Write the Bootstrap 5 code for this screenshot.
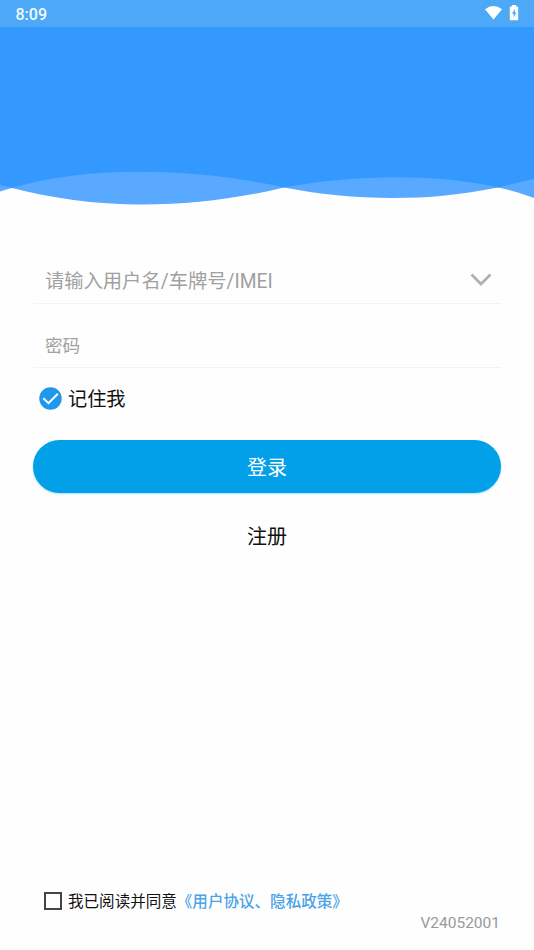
<!DOCTYPE html>
<html lang="zh-CN">
<head>
<meta charset="utf-8">
<meta name="viewport" content="width=device-width, initial-scale=1">
<title>登录</title>
<link href="https://cdn.jsdelivr.net/npm/bootstrap@5.3.0/dist/css/bootstrap.min.css" rel="stylesheet">
<style>
body{font-family:Roboto,"Noto Sans CJK SC",sans-serif;background:#fefefe;color:#111;height:950px;overflow:hidden}
.statusbar{height:27px;background:#4da8f8;color:#effcff;font-size:16px;font-weight:500;line-height:27px;padding:1px 15px 0 15.5px}
.statusbar svg{margin-top:-2px}
.hero{height:183px;background:#fefefe}
.hero svg,.statusbar svg{display:block}
.login{padding:47px 33px 0}
.field{border-bottom:1px solid #f3f3f3;padding:0 8px 0 12px}
.field .form-control{font-size:19.3px;line-height:28px;background:transparent;color:#999}
.field .form-control::placeholder{color:#a0a0a0;opacity:1}
.field-user{height:47px;padding-top:3px}
.field-user svg{margin:12px 1px 0 0}
.field-pass{height:64px;padding-top:21px}
.field-pass .form-control{font-size:17.6px}
.remember{height:28px;margin-top:16px;padding-left:6px;font-size:19.2px;line-height:28px;gap:6px}
.remember span{padding-top:3px}
.btn-login{height:53px;margin-top:28px;padding:8px 0 6px;background:#02a0e9;color:#fff;font-size:20px;line-height:30px;box-shadow:0 1px 2px #a9ddf8}
.btn-login:hover{background:#0293d6;color:#fff}
.btn-register{margin-top:29px;font-size:20px;line-height:30px;color:#111}
.agree{padding-left:44px;font-size:15.55px;line-height:24px;gap:7px}
.agree a{color:#4ba3e8;font-weight:500}
.agree-box{width:18px;height:18px;border:2px solid #444}
.agree-text{padding-top:3px;margin-left:-1px}
.version{font-size:15.5px;line-height:20px;color:#999;padding-right:34px;margin:-1px 0 17px}
</style>
</head>
<body class="d-flex flex-column">
<header>
  <div class="statusbar d-flex justify-content-between align-items-center">
    <span>8:09</span>
    <span class="d-flex align-items-center">
      <svg width="34" height="18" viewBox="0 0 34 18">
        <path d="M0 5.200Q8.500-1.400 17 5.200L8.500 15.400Z" fill="#fff"/>
        <path d="M27 1h4v1.500h1.500q.7 0 .7.700v12.300q0 .7-.7.700h-7q-.7 0-.7-.700V3.200q0-.7.700-.700H27Z" fill="#fff"/>
        <path d="M29.800 4.800 27 9.800h1.700v4l2.700-5.300h-1.600Z" fill="#4da8f8"/>
      </svg>
    </span>
  </div>
  <div class="hero">
    <svg width="534" height="183" viewBox="0 27 534 183">
      <path d="M0 27H534V198Q516 191 498 187.500C460 195 430 198 393 198C355 198 318 194 284 187.500C235 199 190 204.500 142 204.500C95 204.500 50 198 12 188Q5 189.500 0 191.500Z" fill="#58a9ff"/>
      <path d="M0 27H534V179Q516 183 498 187.500C465 180 430 177.300 396 177.300C358 177.300 320 181 284 187.500C235 176.500 185 171.800 136 171.800C92 171.800 50 177 12 188L0 184.500Z" fill="#3399ff"/>
    </svg>
  </div>
</header>
<main class="login">
  <form class="d-flex flex-column">
    <div class="field field-user d-flex align-items-start">
      <input class="form-control border-0 p-0 mt-2 shadow-none" type="text" placeholder="请输入用户名/车牌号/IMEI" aria-label="用户名">
      <svg class="flex-shrink-0" width="22" height="16" viewBox="0 0 22 16"><path d="M1.500 2.500 11 12 20.500 2.500" fill="none" stroke="#b0b0b0" stroke-width="2.800"/></svg>
    </div>
    <div class="field field-pass d-flex align-items-center">
      <input class="form-control border-0 p-0 shadow-none" type="password" placeholder="密码" aria-label="密码">
    </div>
    <div class="remember d-flex align-items-center">
      <svg width="23" height="23" viewBox="0 0 23 23"><circle cx="11.500" cy="11.500" r="11.200" fill="#2196ed"/><path d="M4.300 11.200 9.500 16.200 18.800 6.700" fill="none" stroke="#fff" stroke-width="2"/></svg>
      <span>记住我</span>
    </div>
    <button type="button" class="btn btn-login rounded-pill border-0 w-100">登录</button>
    <button type="button" class="btn btn-register border-0 p-0 align-self-center">注册</button>
  </form>
</main>
<footer class="mt-auto">
  <div class="agree d-flex align-items-center">
    <span class="agree-box"></span>
    <span class="agree-text">我已阅读并同意<a class="text-decoration-none" href="#">《用户协议、隐私政策》</a></span>
  </div>
  <div class="version text-end">V24052001</div>
</footer>
<script src="https://cdn.jsdelivr.net/npm/bootstrap@5.3.0/dist/js/bootstrap.bundle.min.js"></script>
</body>
</html>
